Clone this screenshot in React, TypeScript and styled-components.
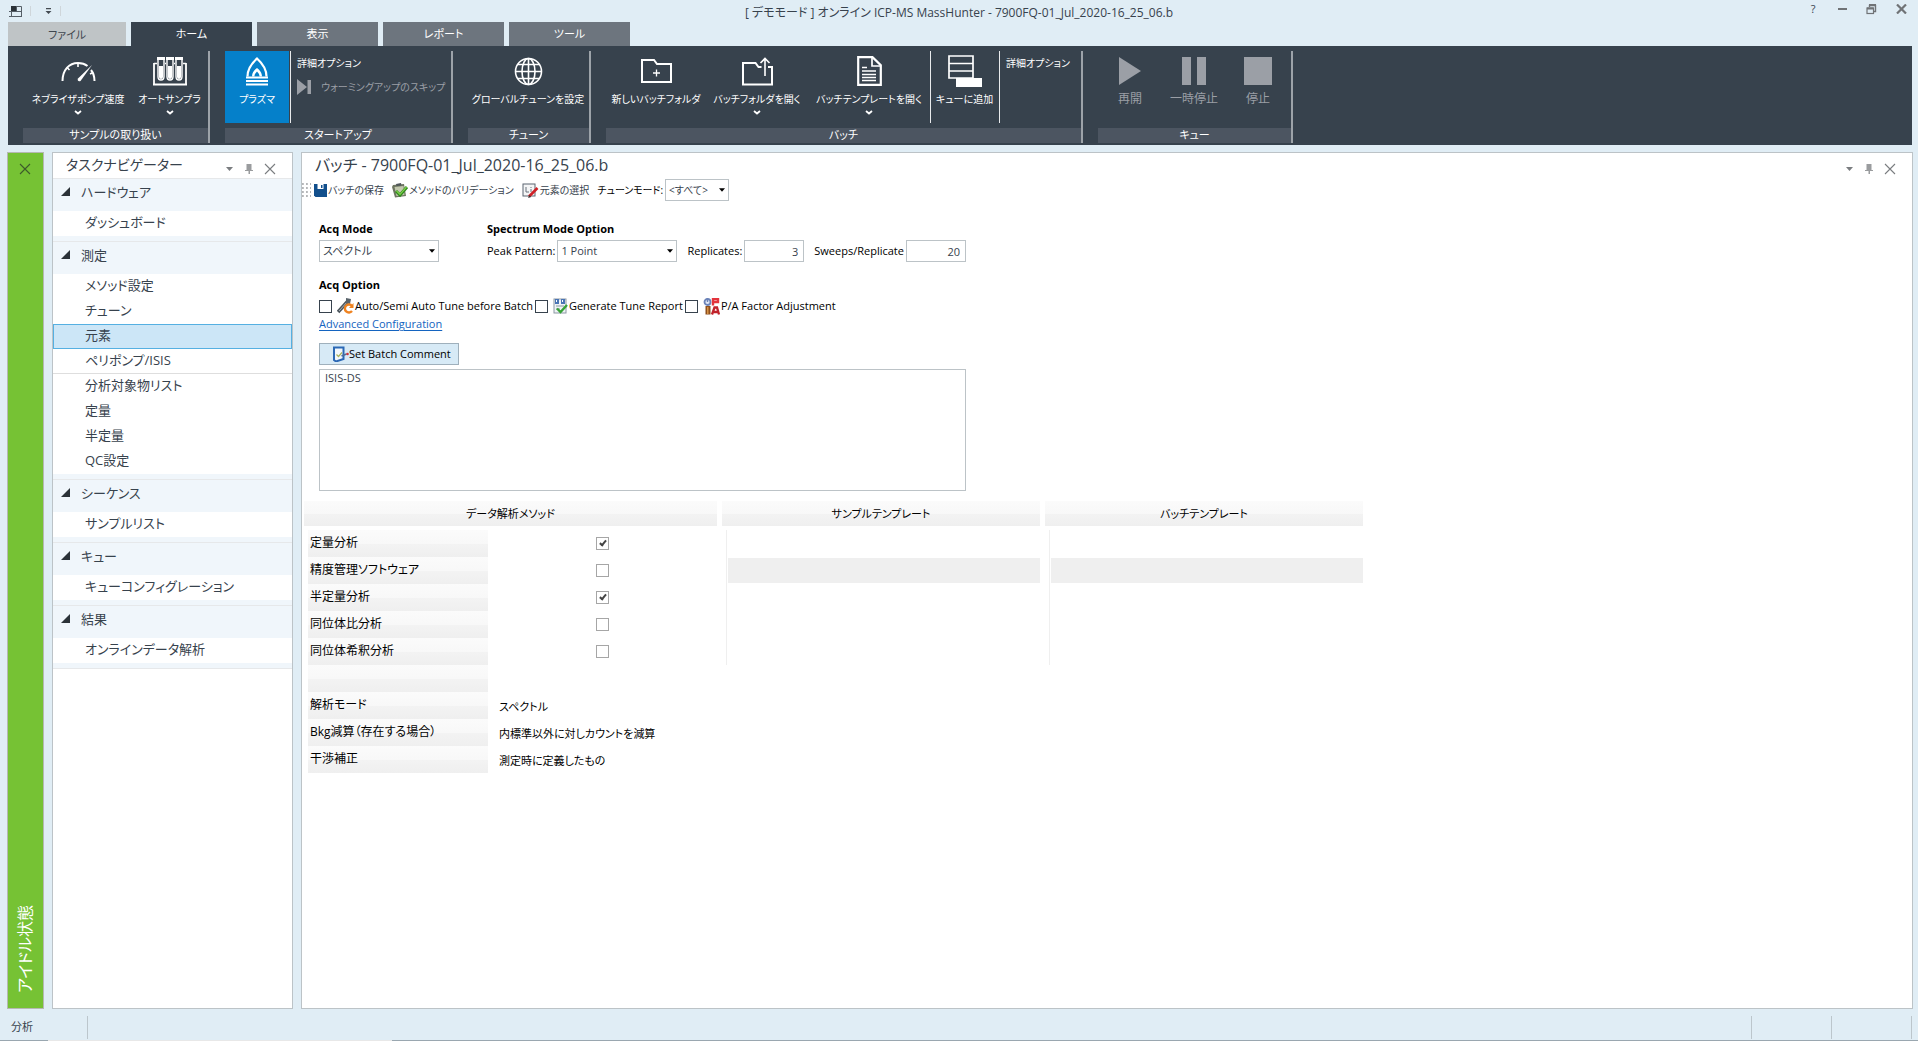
import React from "react";
import styled, { createGlobalStyle, css } from "styled-components";

const Global = createGlobalStyle`
  *, *::before, *::after { box-sizing: border-box; }
  body {
    margin: 0;
    background: #e0edf5;
    color: #37424d;
    font-family: "Open Sans", "Noto Sans CJK JP", sans-serif;
    font-size: 11px;
    line-height: 16px;
    font-feature-settings: "palt";
  }
  button, input, select, textarea {
    font: inherit;
    color: inherit;
    font-feature-settings: inherit;
    margin: 0;
  }
  button { padding: 0; border: 0; background: none; cursor: pointer; }
  svg { display: block; flex: none; }
`;

const Shell = styled.div`
  min-height: 100vh;
  display: flex;
  flex-direction: column;
`;

/* ---------- title bar ---------- */

const TitleBar = styled.header`
  height: 22px;
  display: grid;
  grid-template-columns: 1fr auto 1fr;
  align-items: start;
`;

const QuickAccess = styled.div`
  display: flex;
  align-items: center;
  height: 22px;
  padding-left: 9px;
`;

const QuickDivider = styled.span`
  width: 1px;
  height: 10px;
  background: #cfd6da;
  margin: 0 12px 0 7px;
`;

const WindowTitle = styled.h1`
  margin: 0;
  font-size: 12px;
  font-weight: 400;
  line-height: 25px;
`;

const WindowControls = styled.div`
  display: flex;
  justify-content: flex-end;
  align-items: center;
  height: 18px;
  padding-right: 11px;
  gap: 19px;
`;

const IconButton = styled.button`
  display: flex;
  align-items: center;
  justify-content: center;
  min-width: 10px;
`;

/* ---------- ribbon ---------- */

const RibbonArea = styled.div`
  padding: 0 6px 0 8px;
`;

const Tabs = styled.div`
  display: flex;
  gap: 5px;
`;

const Tab = styled.button<{ $kind?: "file" | "active" }>`
  width: ${(p) => (p.$kind === "file" ? 118 : 121)}px;
  height: 24px;
  font-size: 11px;
  color: #fff;
  background: #6d757e;
  ${(p) => p.$kind === "active" && css`background: #37424d;`}
  ${(p) => p.$kind === "file" && css`background: #bfc4c6; color: #3f474f; padding-top: 2px;`}
`;

const Ribbon = styled.div`
  display: flex;
  background: #37424d;
  color: #fff;
  height: 99px;
  padding: 5px 0 2px 15px;
  gap: 15px;
`;

const Group = styled.section<{ $w: number }>`
  width: ${(p) => p.$w}px;
  border-right: 2px solid #9da3a9;
  display: flex;
  flex-direction: column;
  justify-content: space-between;
`;

const GroupBody = styled.div`
  display: flex;
  height: 72px;
`;

const GroupLabel = styled.h2`
  margin: 0;
  height: 15px;
  background: #4c5561;
  font-size: 11px;
  font-weight: 400;
  line-height: 14px;
  text-align: center;
`;

const BigButton = styled.button<{ $w: number; $primary?: boolean; $line?: boolean }>`
  flex: none;
  width: ${(p) => p.$w}px;
  height: 72px;
  display: flex;
  flex-direction: column;
  align-items: center;
  white-space: nowrap;
  font-size: 10px;
  background: ${(p) => (p.$primary ? "#0580ca" : "none")};
  border-right: ${(p) => (p.$line ? "1px solid #e8eaec" : "0")};
  &:disabled { color: #9b9fa6; font-size: 12px; }
`;

const BigIcon = styled.span`
  height: 40px;
  display: flex;
  align-items: center;
`;

const MenuMark = styled.span`
  margin-top: 3px;
`;

const Side = styled.div`
  display: flex;
  flex-direction: column;
  align-items: flex-start;
  gap: 8px;
  padding: 4px 0 0 6px;
  border-left: 1px solid #e8eaec;
  margin-left: 1px;
  font-size: 10px;
`;

const SideButton = styled.button`
  display: flex;
  align-items: center;
  gap: 9px;
  white-space: nowrap;
  &:disabled { color: #9b9fa6; }
`;

/* ---------- workspace ---------- */

const Workspace = styled.main`
  flex: 1;
  display: grid;
  grid-template-columns: 37px 241px 1fr;
  gap: 8px;
  padding: 7px 5px 0 7px;
`;

const StatusStrip = styled.aside`
  background: #76c234;
  border: 1px solid #b5b9b2;
  display: flex;
  flex-direction: column;
  justify-content: space-between;
  align-items: center;
  padding: 10px 2px 15px 0;
  color: #3d5a2c;
`;

const StripText = styled.span`
  writing-mode: vertical-rl;
  text-orientation: sideways;
  transform: rotate(180deg);
  font-size: 16px;
  line-height: 24px;
  color: #fff;
`;

const Panel = styled.section`
  background: #fff;
  border: 1px solid #bcc3c7;
  min-width: 0;
`;

const PanelHead = styled.div<{ $h: number }>`
  height: ${(p) => p.$h}px;
  display: flex;
  justify-content: space-between;
  padding: 0 16px 0 13px;
`;

const PanelTitle = styled.h2<{ $small?: boolean }>`
  margin: 0;
  font-size: ${(p) => (p.$small ? 14 : 16)}px;
  font-weight: 400;
  line-height: 24px;
  white-space: nowrap;
`;

const PanelTools = styled.div`
  display: flex;
  align-items: center;
  height: 31px;
  gap: 10px;
  color: #7a7d80;
`;

const NavSection = styled.section`
  border-top: 1px solid #e6e8ea;
  border-bottom: 5px solid #f0f6fb;
  &:last-child { box-shadow: 0 1px 0 #e6e8ea; }
`;

const NavHeader = styled.button`
  width: 100%;
  height: 32px;
  display: flex;
  align-items: center;
  gap: 11px;
  padding: 0 0 7px 8px;
  background: #f0f6fb;
  font-size: 13px;
`;

const NavList = styled.ul`
  margin: 0;
  padding: 0;
  list-style: none;
`;

const NavItem = styled.button<{ $selected?: boolean }>`
  display: block;
  width: 100%;
  height: 25px;
  padding: 0 0 3px 31px;
  text-align: left;
  font-size: 13px;
  line-height: 20px;
  border: 1px solid transparent;
  ${(p) => p.$selected && css`background: #cce6f7; border-color: #55b0e2;`}
`;

const NavRow = styled.li<{ $divided?: boolean }>`
  ${(p) => p.$divided && css`box-shadow: inset 0 -1px 0 #dedede;`}
`;

/* ---------- batch panel ---------- */

const Toolbar = styled.div`
  display: flex;
  align-items: center;
  height: 22px;
  gap: 8px;
  font-size: 10px;
`;

const ToolGroup = styled.div`
  display: flex;
  align-items: center;
  gap: 3px;
`;

const ToolButton = styled.button`
  display: flex;
  align-items: center;
  gap: 1px;
  white-space: nowrap;
`;

const Picker = styled.span<{ $w: number }>`
  display: grid;
  width: ${(p) => p.$w}px;
  align-items: center;
  & > * { grid-area: 1 / 1; }
  & > svg { justify-self: end; margin-right: 4px; pointer-events: none; }
`;

const Select = styled.select`
  appearance: none;
  width: 100%;
  height: 22px;
  padding: 0 0 0 3px;
  border: 1px solid #bcc3c7;
  border-radius: 0;
  background: #fff;
  color: #37424d;
`;

const Form = styled.div`
  padding: 19px 0 0 17px;
  color: #000;
`;

const Fields = styled.div`
  display: grid;
  grid-template-columns: 168px auto;
  justify-content: start;
`;

const Heading = styled.h3`
  margin: 0;
  font-size: 11px;
  font-weight: 700;
  line-height: 18px;
`;

const FieldRow = styled.div`
  display: flex;
  align-items: center;
  height: 22px;
  margin-top: 2px;
  gap: 10px;
`;

const Field = styled.label`
  display: flex;
  align-items: center;
  gap: 2px;
  white-space: nowrap;
  color: #000;
`;

const NumberBox = styled.input`
  width: 60px;
  height: 22px;
  border: 1px solid #bcc3c7;
  padding: 0 5px;
  text-align: right;
  color: #37424d;
`;

const OptionBlock = styled.div`
  margin-top: 14px;
`;

const OptionRow = styled.div`
  display: flex;
  align-items: center;
  gap: 2px;
  height: 20px;
  margin-top: 2px;
`;

const Option = styled.label`
  display: flex;
  align-items: center;
  white-space: nowrap;
  gap: 1px;
`;

const Check = styled.input<{ $soft?: boolean }>`
  appearance: none;
  width: 13px;
  height: 13px;
  margin: 0 ${(p) => (p.$soft ? 0 : 4)}px 0 0;
  border: 1px solid ${(p) => (p.$soft ? "#a6a6a6" : "#37424d")};
  background: #fff;
  display: inline-grid;
  place-content: center;
  vertical-align: middle;
  &:checked::before {
    content: "";
    width: 4px;
    height: 7px;
    border: solid #444;
    border-width: 0 2px 2px 0;
    transform: rotate(40deg);
    margin-top: -2px;
  }
`;

const Link = styled.a`
  display: inline-block;
  color: #1464c0;
  text-decoration: underline;
  text-underline-offset: 2px;
`;

const CommentButton = styled.button`
  display: flex;
  align-items: center;
  width: 140px;
  height: 22px;
  margin: 11px 0 4px;
  padding-left: 12px;
  background: #d7eaf6;
  border: 1px solid #9fb0bc;
`;

const Comment = styled.textarea`
  display: block;
  width: 647px;
  max-width: 100%;
  height: 122px;
  padding: 0 5px;
  border: 1px solid #bcc3c7;
  resize: none;
  line-height: 16px;
  color: #37424d;
`;

const Methods = styled.table`
  border-collapse: separate;
  border-spacing: 0;
  table-layout: fixed;
  width: 1059px;
  margin: 10px 0 0 2px;
  color: #000;
  font-size: 12px;
`;

const shade = "linear-gradient(#fbfbfb, #f8f8f8 50%, #f3f3f3 52%, #efefef)";

const HeadCell = styled.th`
  height: 25px;
  padding: 0;
  font-size: 11px;
  font-weight: 400;
  background: ${shade};
`;

const GapCell = styled.td`
  padding: 0;
`;

const LabelCell = styled.th`
  height: 27px;
  padding: 0 0 2px 2px;
  font-weight: 400;
  text-align: left;
  border-left: 4px solid #fff;
  background: ${shade};
`;

const CheckCell = styled.td`
  padding: 0 0 2px;
  text-align: center;
  line-height: 13px;
`;

const TemplateCell = styled.td`
  padding: 0 0 0 4px;
`;

const TemplateBox = styled.div<{ $off?: boolean }>`
  height: 27px;
  border-left: 1px solid #efefef;
  padding: 1px 0 1px 1px;
  background: ${(p) => (p.$off ? "#efefef" : "#fff")} content-box;
`;

const ValueCell = styled.td`
  padding: 2px 0 0 11px;
  font-size: 11px;
`;

const Spacer = styled.tr`
  height: 4px;
  td { padding: 0; }
`;

/* ---------- status bar ---------- */

const StatusBar = styled.footer`
  height: 32px;
  display: flex;
  justify-content: space-between;
  padding: 7px 6px 2px 11px;
  background: linear-gradient(90deg, #9aa7b0 48px, #e8e8e8 48px 392px, #9aa7b0 392px) bottom / 100% 1px no-repeat;
  line-height: 22px;
`;

const StatusCell = styled.span<{ $w: number }>`
  width: ${(p) => p.$w}px;
  border-right: 1px solid #bcc6cc;
`;

const StatusGroup = styled.span`
  display: flex;
`;

/* ---------- icons ---------- */

const Caret = ({ s = 7 }: { s?: number }) => (
  <svg width={s} height="4" viewBox="0 0 7 4"><path d="M0 0h7L3.500 4z" fill="currentColor" /></svg>
);
const Chevron = () => (
  <svg width="8" height="5" viewBox="0 0 8 5"><path d="M1 1l3 2.500L7 1" fill="none" stroke="#fff" strokeWidth="1.800" /></svg>
);
const Pin = () => (
  <svg width="8" height="10" viewBox="0 0 8 10"><path d="M1.500 0h5v6H8v1H5v3H3.500V7H0V6h1.500z" fill="#9a9c9e" /></svg>
);
const Cross = () => (
  <svg width="12" height="12" viewBox="0 0 12 12"><path d="M1 1l10 10M11 1L1 11" stroke="currentColor" strokeWidth="1.100" /></svg>
);
const Triangle = () => (
  <svg width="9" height="9" viewBox="0 0 9 9"><path d="M9 0v9H0z" fill="#2b3238" /></svg>
);
const AppIcon = () => (
  <svg width="14" height="13" viewBox="0 0 14 13">
    <path d="M2.500 1v10.500M2 1.500h10.500v10H2.500M0 6.500h12.500M0 11.500h13M7.500 6.500v-5" fill="none" stroke="#555e66" />
    <rect x="2" y="1" width="5" height="5" fill="#2b3238" />
  </svg>
);
const CustomizeIcon = () => (
  <svg width="7" height="7" viewBox="0 0 7 7"><path d="M1 0h5v1.300H1zM0.500 3h6L3.500 6z" fill="#444b52" /></svg>
);
const RestoreIcon = () => (
  <svg width="11" height="11" viewBox="0 0 11 11">
    <path d="M3.500 3V1.500h6v6H8" fill="none" stroke="#707376" strokeWidth="1.400" />
    <path d="M3 1h7M1 4.500h6.500" stroke="#707376" strokeWidth="2" />
    <rect x="1" y="4" width="6.500" height="5.500" fill="none" stroke="#707376" strokeWidth="1.200" />
  </svg>
);
const CloseIcon = () => (
  <svg width="11" height="10" viewBox="0 0 11 10"><path d="M1 0.500l9 9M10 0.500l-9 9" stroke="#707376" strokeWidth="2.200" /></svg>
);
const GaugeIcon = () => (
  <svg width="35" height="21" viewBox="0 0 35 21">
    <g fill="none" stroke="#fff" strokeWidth="2">
      <path d="M1.500 20C1.500 9 8 2 17 2c4 0 7 1 9.500 3" />
      <path d="M30 9c2.500 3 3.500 6.500 3.500 11" />
      <path d="M6 6.500l2.500 2.500M17 2v4M29 13l3-1.500" strokeWidth="1.600" />
    </g>
    <path d="M31 4L19.500 20c-2 .8-3.500-.5-2.500-2.500z" fill="#fff" />
  </svg>
);
const TubesIcon = () => (
  <svg width="34" height="29" viewBox="0 0 34 29">
    <path d="M1 6v21M33 6v21M0 27.500h34" stroke="#fff" strokeWidth="1.800" />
    {[5, 14, 23].map((x) => (
      <g key={x}>
        <rect x={x - 1} y="0" width="8" height="3" fill="#fff" />
        <path d={`M${x} 3v16.500a3 3.500 0 0 0 6 0V3`} fill="none" stroke="#fff" strokeWidth="1.400" />
        <path d={`M${x + 1} 9h4v11a2 2 0 0 1-4 0z`} fill="#fff" />
      </g>
    ))}
    <path d="M1 6.500h3M12 6.500h1M21 6.500h1M30 6.500h3" stroke="#fff" strokeWidth="1.400" />
  </svg>
);
const PlasmaIcon = () => (
  <svg width="24" height="29" viewBox="0 0 24 29">
    <path d="M2.500 19.500C2.500 12 7 6 12 1.500 17 6 21.500 12 21.500 19.500" fill="none" stroke="#fff" strokeWidth="2.200" />
    <path d="M7 19.500c0-4 2.500-6.500 5-8.500 2.500 2 5 4.500 5 8.500h-2.500c0-2-1-3.500-2.500-5-1.500 1.500-2.500 3-2.500 5z" fill="#fff" />
    <path d="M1 20.500h22M1 24h22M1 27.500h22" stroke="#fff" strokeWidth="2" />
  </svg>
);
const GlobeIcon = () => (
  <svg width="29" height="29" viewBox="0 0 29 29">
    <g fill="none" stroke="#fff" strokeWidth="1.600">
      <circle cx="14.500" cy="14.500" r="13" />
      <ellipse cx="14.500" cy="14.500" rx="6.500" ry="13" />
      <path d="M14.500 1.500v26M1.500 14.500h26M4 7.500h21M4 21.500h21" />
    </g>
  </svg>
);
const NewFolderIcon = () => (
  <svg width="31" height="24" viewBox="0 0 31 24">
    <path d="M1 1h12l3 4h14v18H1z" fill="none" stroke="#fff" strokeWidth="2" />
    <path d="M15.500 10.500v7M12 14h7" stroke="#fff" strokeWidth="1.300" />
  </svg>
);
const OpenFolderIcon = () => (
  <svg width="31" height="29" viewBox="0 0 31 29">
    <path d="M19.500 10h-3l-3-4H1v21.500h29V10h-4" fill="none" stroke="#fff" strokeWidth="2" />
    <path d="M23 19V1.500M18.500 6L23 1.500 27.500 6" fill="none" stroke="#fff" strokeWidth="1.600" />
  </svg>
);
const DocIcon = () => (
  <svg width="25" height="30" viewBox="0 0 25 30">
    <path d="M1.200 1.200h14.300l8.300 8v19.600H1.200z" fill="none" stroke="#fff" strokeWidth="2.200" />
    <path d="M15 1v9h9M5 11.500h5M5 15h14M5 18.500h14M5 21.500h14M5 24.500h14" fill="none" stroke="#fff" strokeWidth="1.700" />
  </svg>
);
const QueueIcon = () => (
  <svg width="34" height="32" viewBox="0 0 34 32">
    <path d="M1 1h24v22H1zM1 8.500h24M1 16h24" fill="none" stroke="#fff" strokeWidth="1.700" />
    <rect x="8" y="23" width="26" height="9" fill="#fff" />
  </svg>
);
const PlayIcon = () => <svg width="24" height="28" viewBox="0 0 24 28"><path d="M1 0l22 14L1 28z" fill="#9b9fa6" /></svg>;
const PauseIcon = () => <svg width="24" height="28" viewBox="0 0 24 28"><path d="M0 0h9v28H0zM15 0h9v28h-9z" fill="#9b9fa6" /></svg>;
const StopIcon = () => <svg width="28" height="28" viewBox="0 0 28 28"><path d="M0 0h28v28H0z" fill="#9b9fa6" /></svg>;
const SkipIcon = () => (
  <svg width="15" height="16" viewBox="0 0 15 16"><path d="M0 0l10 8-10 8zM10.500 1h3.500v14h-3.500z" fill="#9b9fa6" /></svg>
);
const GripIcon = () => (
  <svg width="9" height="16" viewBox="0 0 9 16">
    {[0, 4, 8].map((x) => [1, 5, 9, 13].map((y) => <rect key={`${x}-${y}`} x={x} y={y} width="1.800" height="2" fill="#b4b6b8" />))}
  </svg>
);
const SaveIcon = () => (
  <svg width="13" height="13" viewBox="0 0 13 13">
    <path d="M0 0h13v13H1.500L0 11.500z" fill="#124f8c" />
    <path d="M3.500 0h6v5h-6z" fill="#fff" /><path d="M7 1h1.500v3H7zM2 8h9v1H2z" fill="#124f8c" />
  </svg>
);
const ClipCheckIcon = () => (
  <svg width="16" height="15" viewBox="0 0 16 15">
    <path d="M1 2l11-1 2 12-11 1.500L0 4z" fill="#6d7560" /><path d="M2.500 4l9-1 1 9-8 1z" fill="#c3c8ae" />
    <path d="M4 1l5-1 .5 2.500L4.500 3z" fill="#50565a" />
    <path d="M4 8l4 4 7-8" fill="none" stroke="#2f8a1c" strokeWidth="3" /><path d="M4.500 8L8 11.300 14.500 4" fill="none" stroke="#7ed04a" strokeWidth="1.200" />
  </svg>
);
const ElementIcon = () => (
  <svg width="17" height="15" viewBox="0 0 17 15">
    <rect x="1" y="1" width="12" height="12" fill="#f4f5f6" stroke="#5b6570" />
    <path d="M4 4v5h3M9 6v3M9 4v1" stroke="#69737c" fill="none" />
    <path d="M15.500 5L7 13.500" stroke="#cf2026" strokeWidth="2.600" /><path d="M7.500 12L6 15l3-1z" fill="#333" />
  </svg>
);
const AutoTuneIcon = () => (
  <svg width="17" height="16" viewBox="0 0 17 16">
    <path d="M1 14L11 3" stroke="#4d565d" strokeWidth="3.600" /><path d="M2 13L11 3" stroke="#aab2b8" strokeWidth="1" />
    <path d="M9 0l5 1-1 5-4-1z" fill="#59636b" />
    <path d="M15 8a4 4 0 1 0 0 5" fill="none" stroke="#ef8321" strokeWidth="2.400" /><path d="M16.500 5v5H12z" fill="#ef8321" />
  </svg>
);
const ReportIcon = () => (
  <svg width="15" height="16" viewBox="0 0 15 16">
    <rect x="1" y="1" width="12" height="14" fill="#eef2f5" stroke="#8c98a3" />
    <path d="M2 1h4v5H2zM8 1h4v5H8z" fill="#4974b5" /><path d="M3 2h1v2H3zM9 2h1v2H9z" fill="#fff" />
    <path d="M3 8h8M3 11h4" stroke="#8c98a3" /><path d="M4 10.500l3.500 3.500L14 7" fill="none" stroke="#36a336" strokeWidth="2.400" />
  </svg>
);
const FactorIcon = () => (
  <svg width="17" height="17" viewBox="0 0 17 17">
    <circle cx="4.500" cy="4" r="3" fill="#dfe7f5" stroke="#6b83b8" strokeWidth="1.800" /><path d="M4.500 0v4" stroke="#6b83b8" strokeWidth="1.400" />
    <rect x="2.500" y="8" width="5" height="8.500" fill="#8e4f1c" /><path d="M4 9h1.500v7H4z" fill="#d69245" />
    <path d="M10 7.500V1h5v3h-5" fill="none" stroke="#e3343c" strokeWidth="2.400" />
    <path d="M9 16.500l2.500-7h2.500l2 7M10.500 14h4.500" fill="none" stroke="#c1222b" strokeWidth="2.300" />
  </svg>
);
const CommentIcon = () => (
  <svg width="17" height="16" viewBox="0 0 17 16">
    <path d="M2 1.500h9.500V13L4 15.500 2 14z" fill="#f2f7fb" stroke="#2b68b5" strokeWidth="2" />
    <path d="M4.500 8.500l2 2 3.500-4" fill="none" stroke="#a8b35c" strokeWidth="1.200" />
    <path d="M9.500 10l5-2" stroke="#4b6f9a" strokeWidth="1.800" /><circle cx="15.500" cy="8" r="1.300" fill="#d1343b" />
  </svg>
);

/* ---------- data ---------- */

const navigation = [
  { title: "ハードウェア", items: ["ダッシュボード"] },
  { title: "測定", items: ["メソッド設定", "チューン", "元素", "ペリポンプ/ISIS", "分析対象物リスト", "定量", "半定量", "QC設定"] },
  { title: "シーケンス", items: ["サンプルリスト"] },
  { title: "キュー", items: ["キューコンフィグレーション"] },
  { title: "結果", items: ["オンラインデータ解析"] },
];

const methods = [
  { name: "定量分析", on: true },
  { name: "精度管理ソフトウェア", on: false, locked: true },
  { name: "半定量分析", on: true },
  { name: "同位体比分析", on: false },
  { name: "同位体希釈分析", on: false },
];

const settings = [
  ["", ""],
  ["解析モード", "スペクトル"],
  ["Bkg減算（存在する場合）", "内標準以外に対しカウントを減算"],
  ["干渉補正", "測定時に定義したもの"],
];

const PanelButtons = () => (
  <PanelTools>
    <IconButton aria-label="メニュー"><Caret /></IconButton>
    <IconButton aria-label="固定"><Pin /></IconButton>
    <IconButton aria-label="閉じる"><Cross /></IconButton>
  </PanelTools>
);

type BigProps = {
  icon: React.ReactNode; text: string; w: number;
  menu?: boolean; primary?: boolean; disabled?: boolean; line?: boolean;
};
const Big = ({ icon, text, w, menu, primary, disabled, line }: BigProps) => (
  <BigButton $w={w} $primary={primary} $line={line} disabled={disabled}>
    <BigIcon>{icon}</BigIcon>
    {text}
    {menu && <MenuMark><Chevron /></MenuMark>}
  </BigButton>
);

export default function App() {
  return (
    <Shell>
      <Global />
      <TitleBar>
        <QuickAccess>
          <AppIcon />
          <QuickDivider />
          <IconButton aria-label="クイックアクセスのカスタマイズ"><CustomizeIcon /></IconButton>
          <QuickDivider />
        </QuickAccess>
        <WindowTitle>[ デモモード ] オンライン ICP-MS MassHunter - 7900FQ-01_Jul_2020-16_25_06.b</WindowTitle>
        <WindowControls>
          <IconButton aria-label="ヘルプ">?</IconButton>
          <IconButton aria-label="最小化">
            <svg width="9" height="2" viewBox="0 0 9 2"><path d="M0 0h9v2H0z" fill="#707376" /></svg>
          </IconButton>
          <IconButton aria-label="元に戻す"><RestoreIcon /></IconButton>
          <IconButton aria-label="閉じる"><CloseIcon /></IconButton>
        </WindowControls>
      </TitleBar>

      <RibbonArea>
        <Tabs>
          <Tab $kind="file">ファイル</Tab>
          <Tab $kind="active">ホーム</Tab>
          <Tab>表示</Tab>
          <Tab>レポート</Tab>
          <Tab>ツール</Tab>
        </Tabs>
        <Ribbon>
          <Group $w={187}>
            <GroupBody>
              <Big w={110} icon={<GaugeIcon />} text="ネブライザポンプ速度" menu />
              <Big w={73} icon={<TubesIcon />} text="オートサンプラ" menu />
            </GroupBody>
            <GroupLabel>サンプルの取り扱い</GroupLabel>
          </Group>
          <Group $w={228}>
            <GroupBody>
              <Big w={64} icon={<PlasmaIcon />} text="プラズマ" primary />
              <Side>
                <SideButton>詳細オプション</SideButton>
                <SideButton disabled><SkipIcon />ウォーミングアップのスキップ</SideButton>
              </Side>
            </GroupBody>
            <GroupLabel>スタートアップ</GroupLabel>
          </Group>
          <Group $w={123}>
            <GroupBody>
              <Big w={120} icon={<GlobeIcon />} text="グローバルチューンを設定" />
            </GroupBody>
            <GroupLabel>チューン</GroupLabel>
          </Group>
          <Group $w={477}>
            <GroupBody>
              <Big w={100} icon={<NewFolderIcon />} text="新しいバッチフォルダ" />
              <Big w={102} icon={<OpenFolderIcon />} text="バッチフォルダを開く" menu />
              <Big w={123} icon={<DocIcon />} text="バッチテンプレートを開く" menu line />
              <Big w={67} icon={<QueueIcon />} text="キューに追加" />
              <Side>
                <SideButton>詳細オプション</SideButton>
              </Side>
            </GroupBody>
            <GroupLabel>バッチ</GroupLabel>
          </Group>
          <Group $w={195}>
            <GroupBody>
              <Big w={64} icon={<PlayIcon />} text="再開" disabled />
              <Big w={64} icon={<PauseIcon />} text="一時停止" disabled />
              <Big w={64} icon={<StopIcon />} text="停止" disabled />
            </GroupBody>
            <GroupLabel>キュー</GroupLabel>
          </Group>
        </Ribbon>
      </RibbonArea>

      <Workspace>
        <StatusStrip>
          <IconButton aria-label="閉じる"><Cross /></IconButton>
          <StripText>アイドル状態</StripText>
        </StatusStrip>

        <Panel as="nav">
          <PanelHead $h={25}>
            <PanelTitle $small>タスクナビゲーター</PanelTitle>
            <PanelButtons />
          </PanelHead>
          {navigation.map((section) => (
            <NavSection key={section.title}>
              <NavHeader><Triangle />{section.title}</NavHeader>
              <NavList>
                {section.items.map((item) => (
                  <NavRow key={item} $divided={item === "ペリポンプ/ISIS"}>
                    <NavItem $selected={item === "元素"}>{item}</NavItem>
                  </NavRow>
                ))}
              </NavList>
            </NavSection>
          ))}
        </Panel>

        <Panel>
          <PanelHead $h={26}>
            <PanelTitle>バッチ - 7900FQ-01_Jul_2020-16_25_06.b</PanelTitle>
            <PanelButtons />
          </PanelHead>
          <Toolbar>
            <ToolGroup>
              <GripIcon />
              <ToolButton><SaveIcon />バッチの保存</ToolButton>
            </ToolGroup>
            <ToolButton><ClipCheckIcon />メソッドのバリデーション</ToolButton>
            <ToolButton><ElementIcon />元素の選択</ToolButton>
            <Field>
              チューンモード:
              <Picker $w={64}>
                <Select defaultValue="all"><option value="all">&lt;すべて&gt;</option></Select>
                <Caret s={6} />
              </Picker>
            </Field>
          </Toolbar>

          <Form>
            <Fields>
              <div>
                <Heading>Acq Mode</Heading>
                <FieldRow>
                  <Picker $w={120}>
                    <Select aria-label="Acq Mode" defaultValue="s"><option value="s">スペクトル</option></Select>
                    <Caret s={6} />
                  </Picker>
                </FieldRow>
              </div>
              <div>
                <Heading>Spectrum Mode Option</Heading>
                <FieldRow>
                  <Field>
                    Peak Pattern:
                    <Picker $w={120}>
                      <Select defaultValue="1"><option value="1">1 Point</option></Select>
                      <Caret s={6} />
                    </Picker>
                  </Field>
                  <Field>Replicates:<NumberBox defaultValue="3" /></Field>
                  <Field>Sweeps/Replicate<NumberBox defaultValue="20" /></Field>
                </FieldRow>
              </div>
            </Fields>

            <OptionBlock>
              <Heading>Acq Option</Heading>
              <OptionRow>
                <Option><Check type="checkbox" /><AutoTuneIcon />Auto/Semi Auto Tune before Batch</Option>
                <Option><Check type="checkbox" /><ReportIcon />Generate Tune Report</Option>
                <Option><Check type="checkbox" /><FactorIcon />P/A Factor Adjustment</Option>
              </OptionRow>
              <Link href="#advanced">Advanced Configuration</Link>
            </OptionBlock>

            <CommentButton><CommentIcon />Set Batch Comment</CommentButton>
            <Comment aria-label="Batch Comment" defaultValue="ISIS-DS" />
          </Form>

          <Methods>
            <colgroup>
              <col style={{ width: 184 }} />
              <col style={{ width: 229 }} />
              <col style={{ width: 5 }} />
              <col style={{ width: 318 }} />
              <col style={{ width: 5 }} />
              <col style={{ width: 318 }} />
            </colgroup>
            <thead>
              <tr>
                <HeadCell colSpan={2}>データ解析メソッド</HeadCell>
                <GapCell />
                <HeadCell>サンプルテンプレート</HeadCell>
                <GapCell />
                <HeadCell>バッチテンプレート</HeadCell>
              </tr>
            </thead>
            <tbody>
              <Spacer><td colSpan={6} /></Spacer>
              {methods.map((m) => (
                <tr key={m.name}>
                  <LabelCell scope="row">{m.name}</LabelCell>
                  <CheckCell><Check $soft type="checkbox" aria-label={m.name} defaultChecked={m.on} /></CheckCell>
                  <GapCell />
                  <TemplateCell><TemplateBox $off={m.locked} /></TemplateCell>
                  <GapCell />
                  <TemplateCell><TemplateBox $off={m.locked} /></TemplateCell>
                </tr>
              ))}
              {settings.map(([name, value], i) => (
                <tr key={i}>
                  <LabelCell scope="row">{name}</LabelCell>
                  <ValueCell colSpan={5}>{value}</ValueCell>
                </tr>
              ))}
            </tbody>
          </Methods>
        </Panel>
      </Workspace>

      <StatusBar>
        <StatusCell $w={77}>分析</StatusCell>
        <StatusGroup>
          <StatusCell $w={80} />
          <StatusCell $w={80} />
          <StatusCell $w={80} />
        </StatusGroup>
      </StatusBar>
    </Shell>
  );
}
